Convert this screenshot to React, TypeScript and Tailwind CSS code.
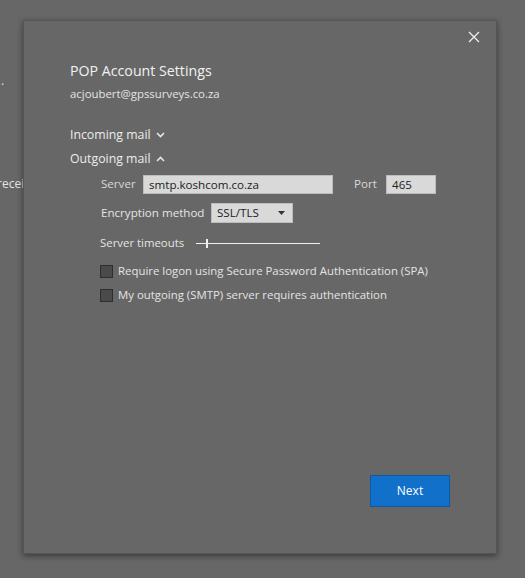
import React from 'react';

const font = { fontFamily: '"Open Sans", "Noto Sans", sans-serif' };

const Chevron = ({ up }: { up?: boolean }) => (
  <svg width="9" height="6" viewBox="0 0 9 6" className="ml-[5px]">
    <path
      d={up ? 'M1 5 L4.5 1.5 L8 5' : 'M1 1 L4.5 4.5 L8 1'}
      fill="none"
      stroke="#e6e6e6"
      strokeWidth="1.6"
    />
  </svg>
);

const Checkbox = ({ label }: { label: string }) => (
  <div className="flex items-center h-[14px]">
    <span className="w-[13px] h-[13px] border border-[#2e2e2e] bg-[#4a4a4a] mr-[5px]" />
    <span className="text-[11.4px] text-[#e4e4e4]">{label}</span>
  </div>
);

export default function App() {
  return (
    <div className="relative w-[525px] h-[578px] bg-[#676767] overflow-hidden" style={font}>
      {/* page behind the dialog */}
      <span className="absolute left-[1px] top-[72px] text-[12px] text-[#e4e4e4]">.</span>
      <span className="absolute left-[-3px] top-[175px] text-[12px] text-[#e4e4e4]">recei</span>

      <div className="absolute left-[23px] top-[20px] w-[474px] h-[534px] bg-[#676767] border border-[#555] shadow-[0_2px_6px_rgba(0,0,0,0.45)] flex flex-col">
        <div className="flex justify-end pt-[10px] pr-[16px]">
          <svg width="12" height="12" viewBox="0 0 12 12">
            <path d="M1 1 L11 11 M11 1 L1 11" stroke="#f0f0f0" strokeWidth="1.3" />
          </svg>
        </div>

        <div className="pl-[46px] pt-[18px] flex flex-col">
          <div className="text-[14.2px] leading-[20px] text-[#f2f2f2]">POP Account Settings</div>
          <div className="text-[11.4px] leading-[16px] mt-[5px] text-[#e4e4e4]">acjoubert@gpssurveys.co.za</div>

          <div className="flex items-center mt-[24px] text-[12.3px] leading-[18px] text-[#ececec]">
            Incoming mail <Chevron />
          </div>
          <div className="flex items-center mt-[6px] text-[12.3px] leading-[18px] text-[#ececec]">
            Outgoing mail <Chevron up />
          </div>

          <div className="pl-[31px] flex flex-col">
            <div className="flex items-center mt-[6px] h-[20px]">
              <span className="text-[11.6px] text-[#d8d8d8] w-[42px]">Server</span>
              <div className="w-[190px] h-[19px] bg-[#d9d9d9] border border-[#bdbdbd] text-[11.6px] leading-[17px] pl-[5px] text-[#222]">
                smtp.koshcom.co.za
              </div>
              <span className="text-[11.6px] text-[#d8d8d8] ml-[21px] w-[32px]">Port</span>
              <div className="w-[50px] h-[19px] bg-[#d9d9d9] border border-[#bdbdbd] text-[11.6px] leading-[17px] pl-[5px] text-[#222]">
                465
              </div>
            </div>

            <div className="flex items-center mt-[9px] h-[20px]">
              <span className="text-[11.6px] text-[#e4e4e4] w-[110px]">Encryption method</span>
              <div className="w-[82px] h-[20px] bg-[#d9d9d9] border border-[#bdbdbd] flex items-center pl-[5px] pr-[7px] text-[11.6px] text-[#222]">
                <span className="flex-1">SSL/TLS</span>
                <svg width="7" height="4" viewBox="0 0 7 4">
                  <path d="M0 0 L7 0 L3.5 4 Z" fill="#333" />
                </svg>
              </div>
            </div>

            <div className="flex items-center mt-[11px] h-[18px] -ml-[1px]">
              <span className="text-[11.4px] text-[#e4e4e4] w-[96px]">Server timeouts</span>
              <div className="relative w-[124px] h-[10px] flex items-center">
                <div className="w-full h-[1px] bg-[#f0f0f0]" />
                <div className="absolute left-[10px] top-[1px] w-[2px] h-[9px] bg-[#f0f0f0]" />
              </div>
            </div>

            <div className="flex flex-col gap-[10px] mt-[12px] -ml-[1px]">
              <Checkbox label="Require logon using Secure Password Authentication (SPA)" />
              <Checkbox label="My outgoing (SMTP) server requires authentication" />
            </div>
          </div>
        </div>

        <div className="flex-1" />
        <div className="flex justify-end pr-[46px] pb-[46px]">
          <button className="w-[80px] h-[32px] bg-[#1170c9] border border-[#0b5aa5] text-[12px] text-white">
            Next
          </button>
        </div>
      </div>
    </div>
  );
}
